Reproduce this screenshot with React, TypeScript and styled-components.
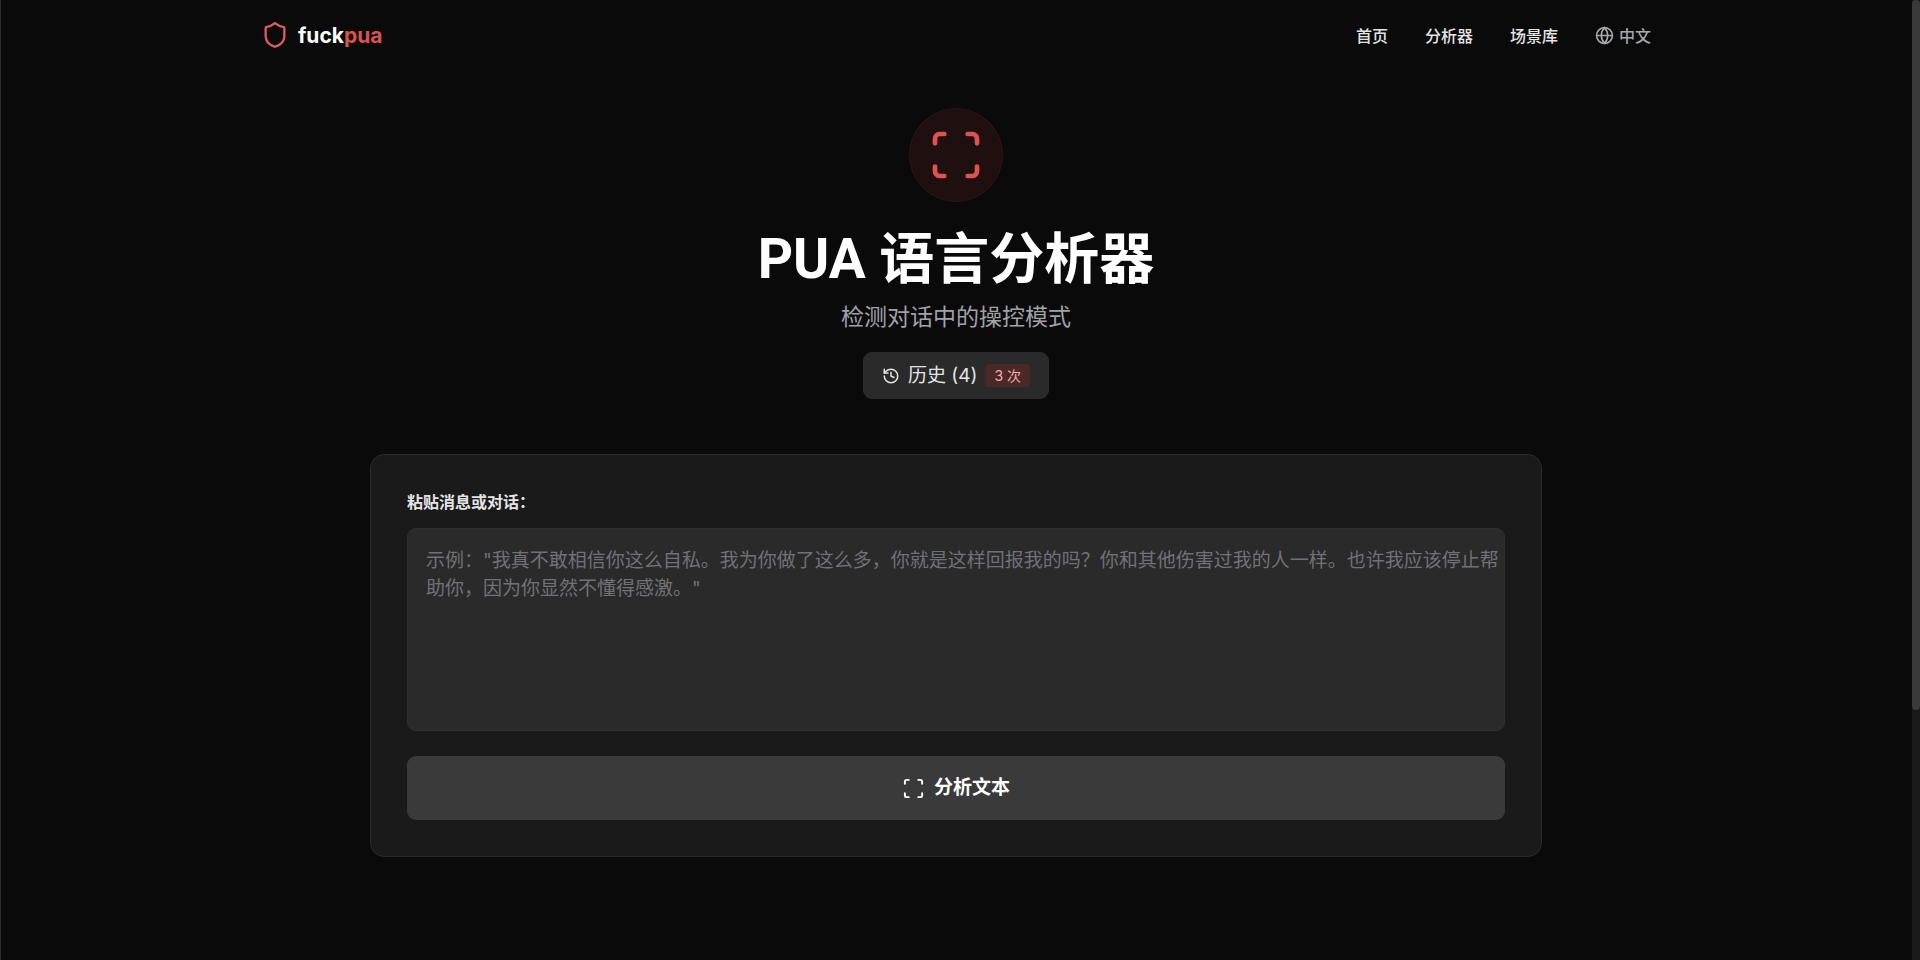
import React from "react";
import styled, { createGlobalStyle } from "styled-components";
import { Globe, History, Scan, Shield } from "lucide-react";

const GlobalStyle = createGlobalStyle`
  *, *::before, *::after { box-sizing: border-box; }
  body {
    margin: 0;
    background: #0a0a0a;
    color: #ffffff;
    font-family: Inter, "Noto Sans CJK SC", sans-serif;
    font-size: 19px;
  }
  button, textarea { font: inherit; color: inherit; }
`;

const Shell = styled.div`
  display: grid;
  grid-template-columns: minmax(0, 1fr) 8px;
  min-height: 100vh;
  box-shadow: inset 1px 0 #2c2c2c;
`;

const ScrollTrack = styled.div`
  background: #1a1a1a;
`;

const ScrollThumb = styled.div`
  height: 74vh;
  border-radius: 4px;
  background: #3a3a3a;
`;

const Page = styled.div`
  display: flex;
  flex-direction: column;
`;

const Header = styled.header`
  display: flex;
  align-items: center;
  justify-content: space-between;
  width: 100%;
  max-width: 1390px;
  height: 70px;
  margin: 0 auto;
`;

const Brand = styled.a`
  display: flex;
  align-items: center;
  gap: 9px;
  color: #ffffff;
  font-size: 21px;
  font-weight: 700;
  text-decoration: none;
`;

const BrandAccent = styled.span`
  color: #d9534f;
`;

const Nav = styled.nav`
  display: flex;
  align-items: center;
  gap: 37px;
`;

const NavLink = styled.a`
  color: #e4e4e7;
  font-size: 16px;
  font-weight: 500;
  text-decoration: none;
`;

const LanguageButton = styled.button`
  display: flex;
  align-items: center;
  gap: 5px;
  padding: 0;
  border: 0;
  background: none;
  color: #a8a8ac;
  font-size: 16px;
  font-weight: 500;
`;

const Main = styled.main`
  display: flex;
  flex-direction: column;
  align-items: center;
  padding: 38px 37px 104px;
`;

const HeroIcon = styled.div`
  display: flex;
  align-items: center;
  justify-content: center;
  width: 94px;
  height: 94px;
  border: 1px solid #2b1717;
  border-radius: 50%;
  background: #1f0f0f;
  color: #e0524d;
`;

const Title = styled.h1`
  margin: 29px 0 0;
  font-family: Roboto, "Noto Sans CJK SC", sans-serif;
  font-size: 55px;
  font-weight: 700;
  line-height: 56px;
`;

const Subtitle = styled.p`
  margin: 14px 0 0;
  color: #a1a1aa;
  font-size: 23px;
  line-height: 33px;
`;

const HistoryButton = styled.button`
  display: flex;
  align-items: center;
  gap: 8px;
  height: 47px;
  margin-top: 18px;
  padding: 0 18px;
  border: 1px solid #2c2c2c;
  border-radius: 9px;
  background: #2a2a2a;
  color: #e4e4e7;
  line-height: 23px;
`;

const Badge = styled.span`
  padding: 0 9px;
  border-radius: 4px;
  background: #4b2929;
  color: #f0b0b0;
  font-size: 14px;
  line-height: 23px;
`;

const Card = styled.form`
  display: flex;
  flex-direction: column;
  width: 100%;
  max-width: 1172px;
  margin-top: 55px;
  padding: 36px;
  border: 1px solid #2a2a2a;
  border-radius: 14px;
  background: #1a1a1a;
`;

const Label = styled.label`
  margin-bottom: 14px;
  color: #e4e4e7;
  font-size: 16px;
  font-weight: 600;
  line-height: 23px;
`;

const MessageInput = styled.textarea`
  height: 203px;
  padding: 18px 4px 18px 18px;
  border: 1px solid #303030;
  border-radius: 9px;
  background: #2a2a2a;
  line-height: 28px;
  resize: none;
  outline: none;

  &::placeholder {
    color: #71717a;
    opacity: 1;
  }
`;

const AnalyzeButton = styled.button`
  display: flex;
  align-items: center;
  justify-content: center;
  gap: 9px;
  height: 64px;
  margin-top: 25px;
  padding: 0;
  border: 0;
  border-radius: 9px;
  background: #3a3a3a;
  color: #ffffff;
  font-weight: 600;
  line-height: 28px;
`;

const links = ["首页", "分析器", "场景库"];

export default function App() {
  return (
    <>
      <GlobalStyle />
      <Shell>
        <Page>
          <Header>
            <Brand href="#">
              <Shield size={28} color="#dc5a62" strokeWidth={2} />
              <span>fuck<BrandAccent>pua</BrandAccent></span>
            </Brand>
            <Nav>
              {links.map((text) => (
                <NavLink key={text} href="#">{text}</NavLink>
              ))}
              <LanguageButton type="button">
                <Globe size={19} strokeWidth={2} />
                中文
              </LanguageButton>
            </Nav>
          </Header>
          <Main>
            <HeroIcon><Scan size={56} strokeWidth={2} /></HeroIcon>
            <Title>PUA 语言分析器</Title>
            <Subtitle>检测对话中的操控模式</Subtitle>
            <HistoryButton type="button">
              <History size={18} strokeWidth={2} />
              <span>历史 (4)</span>
              <Badge>3 次</Badge>
            </HistoryButton>
            <Card onSubmit={(event) => event.preventDefault()}>
              <Label htmlFor="message">粘贴消息或对话：</Label>
              <MessageInput
                id="message"
                placeholder={'示例："我真不敢相信你这么自私。我为你做了这么多，你就是这样回报我的吗？你和其他伤害过我的人一样。也许我应该停止帮助你，因为你显然不懂得感激。"'}
              />
              <AnalyzeButton type="submit">
                <Scan size={23} strokeWidth={2} />
                分析文本
              </AnalyzeButton>
            </Card>
          </Main>
        </Page>
        <ScrollTrack aria-hidden="true"><ScrollThumb /></ScrollTrack>
      </Shell>
    </>
  );
}
